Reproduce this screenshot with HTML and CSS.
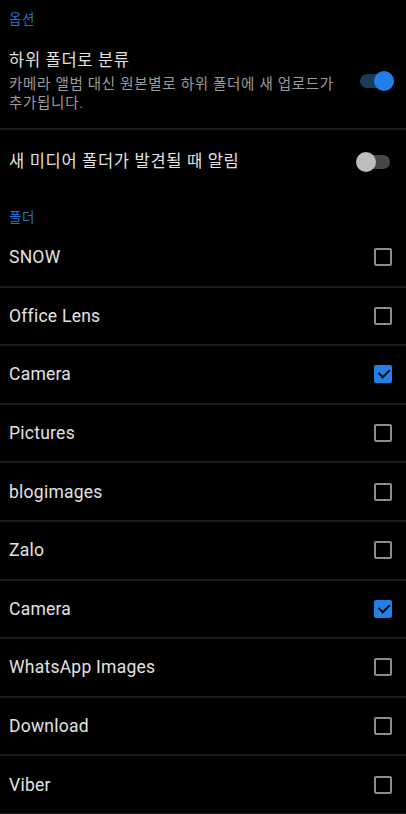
FILE: index.html
```html
<!DOCTYPE html>
<html lang="ko">

<head>
    <meta charset="UTF-8">
    <meta name="viewport" content="width=device-width, initial-scale=1.0">
    <title>폴더 설정</title>
    <link rel="stylesheet" href="styles.css">
</head>

<body>

    <div class="screen">
        <div class="section-title">옵션</div>

        <div class="option">
            <div class="option-text">
                <div class="option-title">하위 폴더로 분류</div>
                <div class="option-desc">카메라 앨범 대신 원본별로 하위 폴더에 새 업로드가 추가됩니다.</div>
            </div>
            <span class="switch on"><span class="knob"></span></span>
        </div>

        <div class="option single">
            <div class="option-text">
                <div class="option-title">새 미디어 폴더가 발견될 때 알림</div>
            </div>
            <span class="switch"><span class="knob"></span></span>
        </div>

        <div class="section-title folders">폴더</div>

        <ul class="folder-list">
            <li class="folder"><span>SNOW</span><span class="check"></span></li>
            <li class="folder"><span>Office Lens</span><span class="check"></span></li>
            <li class="folder"><span>Camera</span><span class="check checked"></span></li>
            <li class="folder"><span>Pictures</span><span class="check"></span></li>
            <li class="folder"><span>blogimages</span><span class="check"></span></li>
            <li class="folder"><span>Zalo</span><span class="check"></span></li>
            <li class="folder"><span>Camera</span><span class="check checked"></span></li>
            <li class="folder"><span>WhatsApp Images</span><span class="check"></span></li>
            <li class="folder"><span>Download</span><span class="check"></span></li>
            <li class="folder"><span>Viber</span><span class="check"></span></li>
        </ul>
    </div>

</body>

</html>
```

FILE: styles.css
```css
body {
    margin: 0;
    padding: 0;
    background: #000;
    color: #e2e2e2;
    font-family: Roboto, "Noto Sans CJK KR", sans-serif;
    overflow: hidden;
}

.screen {
    width: 406px;
    height: 814px;
}

/* Section headers */
.section-title {
    color: #1f72d2;
    font-size: 13.5px;
    line-height: 18px;
    letter-spacing: 0.5px;
    padding: 10px 9px 0;
}

.section-title.folders {
    padding-top: 34px;
}

/* Option rows with a switch */
.option {
    display: flex;
    align-items: center;
    justify-content: space-between;
    padding: 21px 9px 15px 9px;
    border-bottom: 2px solid #1c1c1c;
}

.option.single {
    border-bottom: none;
    padding: 20px 9px 0;
}

.option-text {
    width: 334px;
    flex-shrink: 0;
    word-break: keep-all;
}

.option-title {
    font-size: 16.5px;
    line-height: 24px;
    letter-spacing: 0.7px;
}

.option-desc {
    font-size: 14.5px;
    line-height: 19px;
    color: #9c9c9c;
    margin-top: 2px;
    letter-spacing: 0.7px;
}

.switch {
    position: relative;
    width: 30px;
    height: 14px;
    border-radius: 7px;
    background: #474747;
    margin-right: 7px;
    flex-shrink: 0;
}

.switch .knob {
    position: absolute;
    top: -3px;
    left: -4px;
    width: 20px;
    height: 20px;
    border-radius: 50%;
    background: #bdbdbd;
}

.switch.on {
    background: #1b3b5a;
}

.switch.on .knob {
    left: auto;
    right: -4px;
    background: #2180e6;
}

/* Folder list */
.folder-list {
    list-style: none;
    margin: 0;
    padding: 0;
    margin-top: 3px;
}

.folder {
    display: flex;
    align-items: center;
    justify-content: space-between;
    height: 56.6px;
    padding: 0 14px 0 9px;
    border-bottom: 2px solid #1c1c1c;
    font-size: 17.5px;
    letter-spacing: 0.25px;
}

.check {
    width: 14px;
    height: 14px;
    border: 2px solid #8c8c8c;
    border-radius: 2px;
}

.check.checked {
    background: #2180e6;
    border-color: #2180e6;
    position: relative;
}

.check.checked::after {
    content: "";
    position: absolute;
    left: 2px;
    top: 1px;
    width: 9px;
    height: 5px;
    border-left: 2px solid #000;
    border-bottom: 2px solid #000;
    transform: rotate(-45deg) translate(0, 1px);
}
```
